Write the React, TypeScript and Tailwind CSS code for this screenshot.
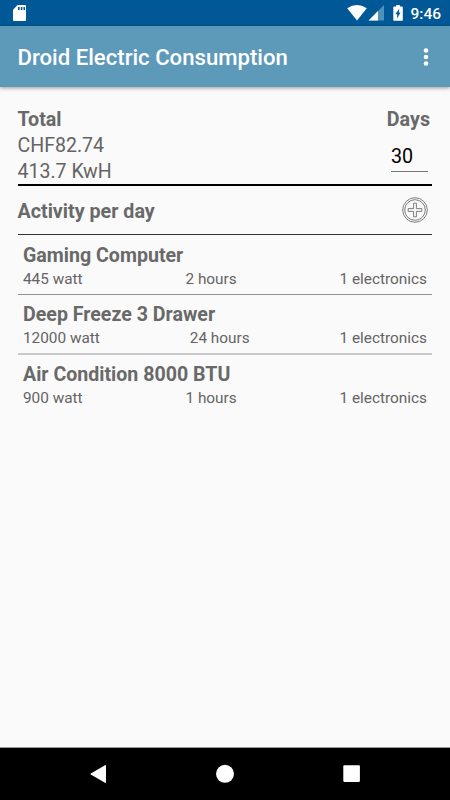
const activities = [
  { name: 'Gaming Computer', watt: '445 watt', hours: '2 hours', count: '1 electronics', row: 'pt-[8px] h-[60px] border-b border-[#929292]' },
  { name: 'Deep Freeze 3 Drawer', watt: '12000 watt', hours: '24 hours', count: '1 electronics', row: 'pt-[7px] h-[60px] border-b-2 border-[#cacaca]' },
  { name: 'Air Condition 8000 BTU', watt: '900 watt', hours: '1 hours', count: '1 electronics', row: 'pt-[7px] h-[60px]' },
];

function StatusBar() {
  return (
    <div className="flex h-[26px] shrink-0 items-center justify-between bg-[#005996] pl-[13px] pr-[9px] text-white">
      <svg width="13" height="16" viewBox="0 0 13 16">
        <path fill="#fff" d="M4.6 0H12a1 1 0 0 1 1 1v14a1 1 0 0 1-1 1H1a1 1 0 0 1-1-1V4.8z" />
        <path fill="#005996" d="M5 2h1.6v3H5zM7.800 2h1.600v3H7.800zM10.500 2H12v3h-1.500z" />
      </svg>
      <div className="flex items-center">
        <svg width="57" height="18" viewBox="347 4 57 18">
          <path fill="#fff" d="M347.200 8.300Q357 1.600 366.800 8.300L357 20.400z" />
          <path fill="#4d91bc" d="M384 5v15.600h-15.400z" />
          <path fill="#fff" d="M378 11.100v9.500h-9.400z" />
          <path fill="#fff" d="M396.300 5h3.600v1.400h2a.9.9 0 0 1 .9.9v12.600a.9.9 0 0 1-.9.9h-7.700a.9.9 0 0 1-.9-.9V7.300a.9.9 0 0 1 .9-.9h2.100z" />
          <path fill="#005996" d="M399.300 8.600l-.5 4h1.700l-3.600 6.200.4-4.600h-1.900z" />
        </svg>
        <span className="ml-[6px] mt-[3px] text-[15.500px] font-medium leading-none">9:46</span>
      </div>
    </div>
  );
}

function AddIcon() {
  return (
    <svg width="26" height="26" viewBox="0 0 26 26" fill="none" stroke="#707070" strokeWidth="0.9">
      <circle cx="13" cy="13" r="12.300" />
      <circle cx="13" cy="13" r="10.300" />
      <path strokeLinejoin="round" d="M11.600 6.200h2.800v5.400h5.400v2.800h-5.400v5.400h-2.800v-5.400H6.200v-2.800h5.400z" />
    </svg>
  );
}

export default function App() {
  return (
    <div className="flex h-[800px] w-[450px] flex-col overflow-hidden bg-[#fafafa] font-[Roboto,sans-serif] text-[19.700px] leading-[26px] text-[#646464]">
      <StatusBar />
      <header className="flex h-[61px] shrink-0 items-center justify-between bg-[#5d99b9] pl-[17.500px] pr-[21px] text-white shadow-[0_1px_4px_rgba(0,0,0,0.4)]">
        <h1 className="pt-[1px] text-[22.150px] font-medium">Droid Electric Consumption</h1>
        <svg width="6" height="20" viewBox="0 0 6 20" fill="#fff">
          <circle cx="3" cy="3.500" r="2.300" />
          <circle cx="3" cy="10" r="2.300" />
          <circle cx="3" cy="16.500" r="2.300" />
        </svg>
      </header>
      <main className="flex-1 pl-[17.500px] pr-[18px] pt-[20px]">
        <section className="flex h-[79px] justify-between border-b-2 border-black">
          <div>
            <div className="font-bold text-[#696969]">Total</div>
            <div className="text-[19.550px]">CHF82.74</div>
            <div className="text-[19.550px]">413.7 KwH</div>
          </div>
          <div className="flex flex-col items-end pr-[2px]">
            <div className="font-bold text-[#696969]">Days</div>
            <div className="mr-[2px] mt-[11px] h-[28px] w-[37px] border-b border-[#777] text-black">30</div>
          </div>
        </section>
        <section className="flex h-[49px] items-center justify-between border-b border-[#333] pr-[4px]">
          <h2 className="pt-[3px] font-bold text-[#696969]">Activity per day</h2>
          <AddIcon />
        </section>
        {activities.map((a) => (
          <article key={a.name} className={a.row + ' pl-[5.500px] pr-[5px]'}>
            <h3 className="text-[19.600px] font-bold text-[#696969]">{a.name}</h3>
            <div className="flex justify-between text-[15.350px] leading-[20px]">
              <span>{a.watt}</span>
              <span>{a.hours}</span>
              <span>{a.count}</span>
            </div>
          </article>
        ))}
      </main>
      <nav className="h-[53px] shrink-0 border-t border-[#999] bg-black">
        <svg width="450" height="52" viewBox="0 748 450 52" fill="#fff">
          <path d="M105 765.200q1-.5 1 .6v16.400q0 1.100-1 .6l-14.200-8.200q-.9-.6 0-1.200z" />
          <circle cx="225" cy="773.800" r="9" />
          <rect x="343.300" y="765.300" width="16.600" height="16.600" rx="0.800" />
        </svg>
      </nav>
    </div>
  );
}
